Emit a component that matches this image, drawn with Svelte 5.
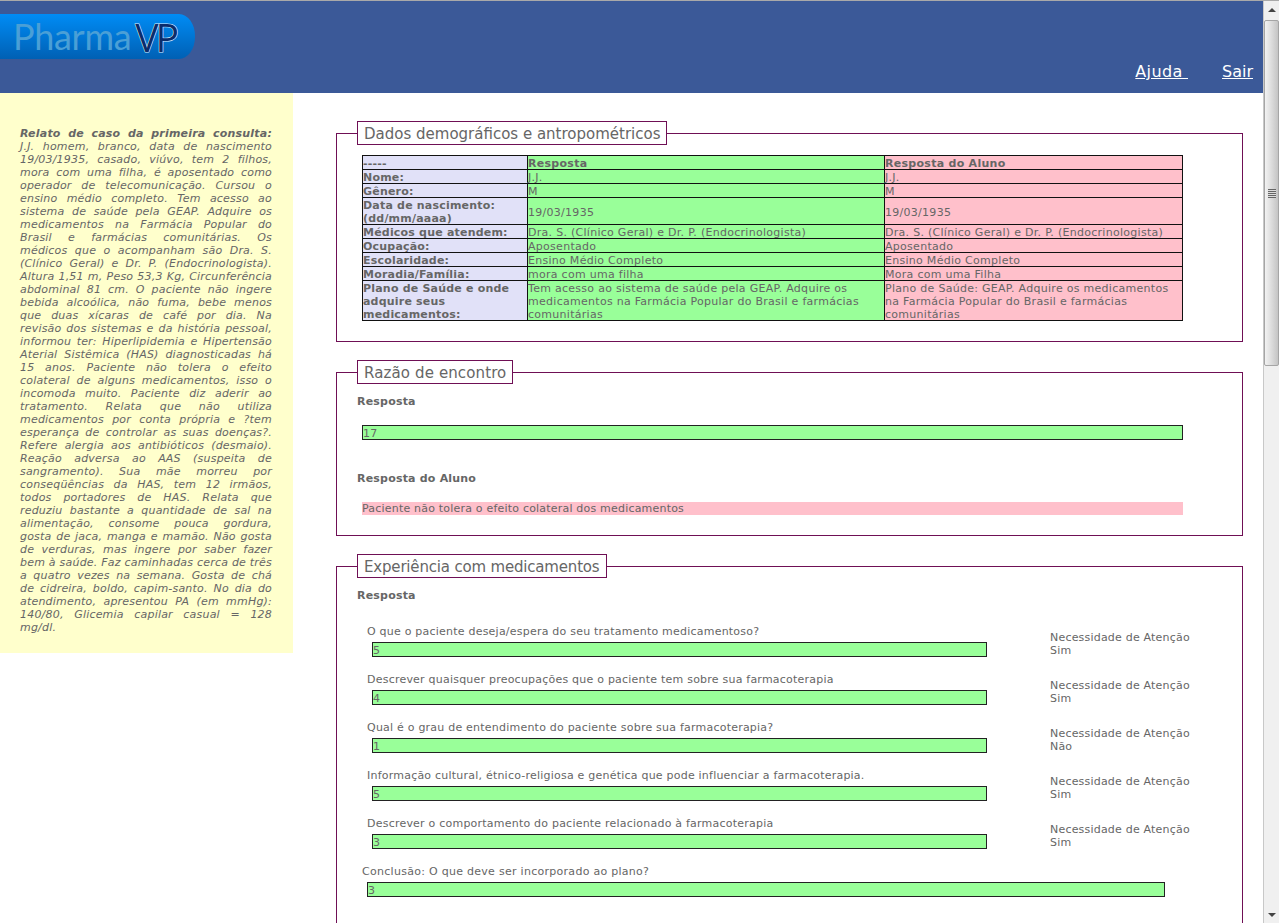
<script>
  const sideText = `J.J. homem, branco, data de nascimento 19/03/1935, casado, viúvo, tem 2 filhos, mora com uma filha, é aposentado como operador de telecomunicação. Cursou o ensino médio completo. Tem acesso ao sistema de saúde pela GEAP. Adquire os medicamentos na Farmácia Popular do Brasil e farmácias comunitárias. Os médicos que o acompanham são Dra. S. (Clínico Geral) e Dr. P. (Endocrinologista). Altura 1,51 m, Peso 53,3 Kg, Circunferência abdominal 81 cm. O paciente não ingere bebida alcoólica, não fuma, bebe menos que duas xícaras de café por dia. Na revisão dos sistemas e da história pessoal, informou ter: Hiperlipidemia e Hipertensão Aterial Sistêmica (HAS) diagnosticadas há 15 anos. Paciente não tolera o efeito colateral de alguns medicamentos, isso o incomoda muito. Paciente diz aderir ao tratamento. Relata que não utiliza medicamentos por conta própria e ?tem esperança de controlar as suas doenças?. Refere alergia aos antibióticos (desmaio). Reação adversa ao AAS (suspeita de sangramento). Sua mãe morreu por conseqüências da HAS, tem 12 irmãos, todos portadores de HAS. Relata que reduziu bastante a quantidade de sal na alimentação, consome pouca gordura, gosta de jaca, manga e mamão. Não gosta de verduras, mas ingere por saber fazer bem à saúde. Faz caminhadas cerca de três a quatro vezes na semana. Gosta de chá de\u00a0cidreira, boldo, capim-santo. No dia do atendimento, apresentou PA (em mmHg): 140/80, Glicemia capilar casual = 128 mg/dl.`;

  const rows = [
    ['Nome:', 'J.J.', 'J.J.'],
    ['Gênero:', 'M', 'M'],
    ['Data de nascimento: (dd/mm/aaaa)', '19/03/1935', '19/03/1935'],
    ['Médicos que atendem:', 'Dra. S. (Clínico Geral) e Dr. P. (Endocrinologista)', 'Dra. S. (Clínico Geral) e Dr. P. (Endocrinologista)'],
    ['Ocupação:', 'Aposentado', 'Aposentado'],
    ['Escolaridade:', 'Ensino Médio Completo', 'Ensino Médio Completo'],
    ['Moradia/Família:', 'mora com uma filha', 'Mora com uma Filha'],
    ['Plano de Saúde e onde adquire seus medicamentos:', 'Tem acesso ao sistema de saúde pela GEAP. Adquire os medicamentos na Farmácia Popular do Brasil e farmácias comunitárias', 'Plano de Saúde: GEAP. Adquire os medicamentos na Farmácia Popular do Brasil e farmácias comunitárias']
  ];

  const questions = [
    ['O que o paciente deseja/espera do seu tratamento medicamentoso?', '5', 'Sim'],
    ['Descrever quaisquer preocupações que o paciente tem sobre sua farmacoterapia', '4', 'Sim'],
    ['Qual é o grau de entendimento do paciente sobre sua farmacoterapia?', '1', 'Não'],
    ['Informação cultural, étnico-religiosa e genética que pode influenciar a farmacoterapia.', '5', 'Sim'],
    ['Descrever o comportamento do paciente relacionado à farmacoterapia', '3', 'Sim']
  ];
</script>

<div class="page">
  <div class="main">
    <header class="top">
      <div class="logo"><span class="ph">Pharma</span><span class="vp">VP</span></div>
      <nav class="links"><a class="aj" href="#a">Ajuda&nbsp;</a><a href="#s">Sair</a></nav>
    </header>
    <div class="body">
      <aside class="side">
        <p><b>Relato de caso da primeira consulta:</b> {sideText}</p>
      </aside>
      <main class="content">
        <section class="box first">
          <h2>Dados demográficos e antropométricos</h2>
          <table>
            <colgroup><col class="c1" /><col class="c2" /><col class="c3" /></colgroup>
            <tbody>
              <tr><th><div class="cell">-----</div></th><td class="g"><div class="cell"><b>Resposta</b></div></td><td class="p"><div class="cell"><b>Resposta do Aluno</b></div></td></tr>
              {#each rows as r}
                <tr><th><div class="cell">{r[0]}</div></th><td class="g"><div class="cell">{r[1]}</div></td><td class="p"><div class="cell">{r[2]}</div></td></tr>
              {/each}
            </tbody>
          </table>
        </section>

        <section class="box second">
          <h2 class="wider">Razão de encontro</h2>
          <h3>Resposta</h3>
          <div class="answer bar">17</div>
          <h3 class="alu">Resposta do Aluno</h3>
          <div class="answer pinkbar">Paciente não tolera o efeito colateral dos medicamentos</div>
        </section>

        <section class="box third">
          <h2 class="narrower">Experiência com medicamentos</h2>
          <h3>Resposta</h3>
          <div class="qs">
            {#each questions as q}
              <div class="q">
                <div class="ql">
                  <div class="qt">{q[0]}</div>
                  <div class="bar qb">{q[1]}</div>
                </div>
                <div class="na">Necessidade de Atenção<br />{q[2]}</div>
              </div>
            {/each}
          </div>
          <div class="concl">
            <div class="qt">Conclusão: O que deve ser incorporado ao plano?</div>
            <div class="bar cb">3</div>
          </div>
          <h3 class="last">Resposta do Aluno</h3>
        </section>
      </main>
    </div>
  </div>
  <div class="scroll" aria-hidden="true">
    <div class="arrow"><svg width="8" height="4" viewBox="0 0 8 4"><path d="M4 0 8 4H0z" fill="#444" /></svg></div>
    <div class="track">
      <div class="thumb"><div class="grip"></div></div>
    </div>
    <div class="arrow"><svg width="8" height="4" viewBox="0 0 8 4"><path d="M0 0h8L4 4z" fill="#444" /></svg></div>
  </div>
</div>

<style>
  :global(body) { margin: 0; overflow: hidden; background: #fff; }
  .page {
    width: 1279px; height: 923px; overflow: hidden; display: flex;
    font-family: "DejaVu Sans", Verdana, sans-serif; font-size: 11px; line-height: 13px; color: #666;
    letter-spacing: .2px;
    border-top: 1px solid #a9a9a9; box-sizing: border-box;
  }
  .main { width: 1263px; flex: none; height: 922px; overflow: hidden; }
  .top { height: 92px; background: #3b5998; position: relative; letter-spacing: 0; }
  .logo {
    position: absolute; left: 0; top: 13px; width: 195px; height: 45px;
    background: linear-gradient(#008cf5, #0060b4);
    border-radius: 0 16px 16px 0 / 0 22px 22px 0;
    font-family: Lato, sans-serif; line-height: 45px; white-space: nowrap;
    display: flex;
  }
  .ph { color: #4a9fd6; margin-left: 13px; font-size: 36px; letter-spacing: -.3px; }
  .vp {
    font-family: "Open Sans", sans-serif;
    color: #0b2c6a; margin-left: 4px; font-size: 39px; letter-spacing: -3px;
    -webkit-text-stroke: 1.2px #d8eeff; paint-order: stroke fill;
  }
  .links {
    position: absolute; right: 10px; bottom: 12px; display: flex; gap: 34px;
    font-size: 16px; line-height: 19px;
  }
  .links a { color: #fff; text-decoration: underline; }
  .links .aj { letter-spacing: .35px; }

  .body { display: flex; align-items: flex-start; }
  .side {
    width: 293px; flex: none; box-sizing: border-box; background: #ffffcc;
    height: 560px; padding: 34px 21px 0 20px; font-style: italic; text-align: justify;
  }
  .side p { margin: 0; line-height: 13px; }
  .content { flex: 1; padding-left: 43px; padding-right: 20px; min-width: 0; }

  .box {
    border: 1px solid #6f0f55; position: relative; box-sizing: border-box;
    padding: 0 20px; width: 907px;
  }
  .box h2 {
    position: absolute; left: 20px; top: -13px; margin: 0; background: #fff;
    border: 1px solid #6f0f55; font-weight: 400; font-size: 15px; line-height: 20px;
    padding: 2px 6px 0; color: #666; letter-spacing: 0;
  }
  .box h2.wider { letter-spacing: .12px; }
  .box h2.narrower { letter-spacing: -.18px; }
  .first { margin-top: 40px; height: 209px; padding-top: 21px; }
  .second { margin-top: 30px; height: 164px; }
  .third { margin-top: 30px; height: 500px; }

  table { border-collapse: collapse; table-layout: fixed; width: 820px; margin-left: 5px; }
  .c1 { width: 165px; } .c2 { width: 357px; } .c3 { width: 298px; }
  th, td { border: 1px solid #111; padding: 0; vertical-align: middle; text-align: left; }
  th { background: #e1e1f8; font-weight: 700; }
  .g { background: #99ff99; }
  .p { background: #ffc0cb; }
  .cell { padding-top: 1px; margin-bottom: -1px; }
  .g .cell, .p .cell { letter-spacing: .28px; }

  h3 { margin: 0; font-size: 11px; line-height: 13px; font-weight: 700; color: #666; }
  .second h3:first-of-type { margin-top: 22px; }
  .answer { margin-left: 5px; width: 819px; }
  .bar { background: #99ff99; border: 1px solid #222; height: 12px; padding-top: 1px; }
  .second .bar { margin-top: 17px; }
  .second .alu { margin-top: 32px; }
  .second .pinkbar {
    background: #ffc0cb; margin-top: 17px; width: 821px; height: 13px; border: 0; padding: 0;
  }

  .third h3:first-of-type { margin-top: 22px; }
  .qs { margin-top: 23px; padding-left: 10px; }
  .q { display: flex; height: 48px; }
  .ql { width: 683px; flex: none; }
  .qt { line-height: 13px; letter-spacing: .22px; }
  .qb { margin: 4px 0 0 5px; width: 613px; }
  .na { margin-top: 6px; line-height: 13px; }
  .concl { margin-left: 5px; }
  .concl .qt { letter-spacing: .28px; }
  .cb { margin: 4px 0 0 5px; width: 796px; }
  .last { margin-top: 26px; }

  .scroll {
    width: 16px; flex: none; height: 922px; background: #f0f0f0; display: flex; flex-direction: column;
    border-left: 1px solid #c8c8c8; box-sizing: border-box;
  }
  .arrow { height: 17px; display: flex; align-items: center; justify-content: center; flex: none; }
  .track { flex: 1; }
  .thumb {
    height: 346px; margin: 2px 0 0 0; border: 1px solid #a5a5a5; border-radius: 2px; box-sizing: border-box;
    background: linear-gradient(90deg, #f2f2f2, #dcdcdc 50%, #c4c4c4); position: relative;
  }
  .grip {
    position: absolute; left: 3px; top: 168px; width: 8px; height: 9px;
    background: repeating-linear-gradient(#666 0 1px, #ddd 1px 2px);
  }
</style>
